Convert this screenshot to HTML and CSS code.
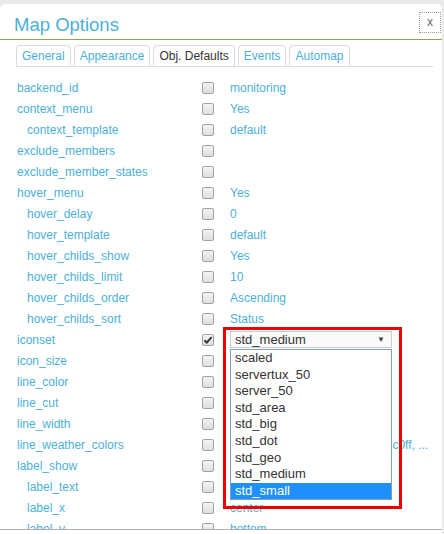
FILE: index.html
```html
<!DOCTYPE html>
<html>
<head>
<meta charset="utf-8">
<link rel="stylesheet" href="styles.css">
</head>
<body>
<div class="dialog">
  <div class="header">
    <h1 class="title">Map Options</h1>
    <div class="close">x</div>
  </div>
  <div class="tabs">
    <div class="tab">General</div>
    <div class="tab">Appearance</div>
    <div class="tab active">Obj. Defaults</div>
    <div class="tab">Events</div>
    <div class="tab">Automap</div>
  </div>
  <div class="content">
    <div class="row"><span class="label">backend_id</span><span class="cb"></span><span class="val">monitoring</span></div>
    <div class="row"><span class="label">context_menu</span><span class="cb"></span><span class="val">Yes</span></div>
    <div class="row"><span class="label sub">context_template</span><span class="cb"></span><span class="val">default</span></div>
    <div class="row"><span class="label">exclude_members</span><span class="cb"></span><span class="val"></span></div>
    <div class="row"><span class="label">exclude_member_states</span><span class="cb"></span><span class="val"></span></div>
    <div class="row"><span class="label">hover_menu</span><span class="cb"></span><span class="val">Yes</span></div>
    <div class="row"><span class="label sub">hover_delay</span><span class="cb"></span><span class="val">0</span></div>
    <div class="row"><span class="label sub">hover_template</span><span class="cb"></span><span class="val">default</span></div>
    <div class="row"><span class="label sub">hover_childs_show</span><span class="cb"></span><span class="val">Yes</span></div>
    <div class="row"><span class="label sub">hover_childs_limit</span><span class="cb"></span><span class="val">10</span></div>
    <div class="row"><span class="label sub">hover_childs_order</span><span class="cb"></span><span class="val">Ascending</span></div>
    <div class="row"><span class="label sub">hover_childs_sort</span><span class="cb"></span><span class="val">Status</span></div>
    <div class="row">
      <span class="label">iconset</span>
      <span class="cb checked"><svg width="12" height="12" viewBox="0 0 12 12"><path d="M2.5 6.2 L4.8 8.6 L9.6 3.2" fill="none" stroke="#333" stroke-width="2"/></svg></span>
      <div class="val selcell">
        <div class="select"><span>std_medium</span><span class="arrow">▼</span></div>
        <ul class="dropdown">
          <li>scaled</li>
          <li>servertux_50</li>
          <li>server_50</li>
          <li>std_area</li>
          <li>std_big</li>
          <li>std_dot</li>
          <li>std_geo</li>
          <li>std_medium</li>
          <li class="hl">std_small</li>
        </ul>
        <div class="highlight"></div>
      </div>
    </div>
    <div class="row"><span class="label">icon_size</span><span class="cb"></span><span class="val"></span></div>
    <div class="row"><span class="label">line_color</span><span class="cb"></span><span class="val"></span></div>
    <div class="row"><span class="label">line_cut</span><span class="cb"></span><span class="val"></span></div>
    <div class="row"><span class="label">line_width</span><span class="cb"></span><span class="val"></span></div>
    <div class="row"><span class="label">line_weather_colors</span><span class="cb"></span><span class="val weather"><span class="hidden-part">10:#8c00ff, 25:#2020ff, 40:#00</span>c0ff, ...</span></div>
    <div class="row"><span class="label">label_show</span><span class="cb"></span><span class="val"></span></div>
    <div class="row"><span class="label sub">label_text</span><span class="cb"></span><span class="val"></span></div>
    <div class="row"><span class="label sub">label_x</span><span class="cb"></span><span class="val">center</span></div>
    <div class="row"><span class="label sub">label_y</span><span class="cb"></span><span class="val">bottom</span></div>
  </div>
</div>
</body>
</html>
```
FILE: styles.css
```css
* { box-sizing: border-box; }
html, body {
  margin: 0;
  padding: 0;
  background: #e9e9e9;
  font-family: "Liberation Sans", Arial, sans-serif;
  height: 534px;
  overflow: hidden;
}
.dialog {
  margin-top: 4px;
  width: 442px;
  height: 530px;
  background: #fff;
  border-radius: 5px 5px 0 0;
  overflow: hidden;
}
.header {
  display: flex;
  align-items: flex-start;
  height: 36px;
  padding: 10px 1px 0 14px;
  border-bottom: 1px solid #8aa84a;
}
.title {
  margin: 0;
  font-size: 18.5px;
  line-height: 21px;
  font-weight: normal;
  color: #4cb0d8;
}
.close {
  margin-left: auto;
  margin-top: -2px;
  width: 22px;
  height: 21px;
  border: 1px dotted #9a9a9a;
  color: #666;
  font-size: 12px;
  line-height: 18px;
  text-align: center;
}
.tabs {
  display: flex;
  gap: 3px;
  margin: 5px 9px 0 16px;
  border-bottom: 1px solid #dcdcdc;
}
.tab {
  border: 1px solid #dcdcdc;
  border-bottom: none;
  border-radius: 4px 4px 0 0;
  padding: 0 5px;
  line-height: 20px;
  font-size: 12px;
  color: #4cb0d8;
  background: #fff;
}
.tab.active {
  color: #333;
}
.content {
  height: 463px;
  padding: 10px 0 0 17px;
  border-bottom: 1px solid #b0b0b0;
  overflow: hidden;
}
.row {
  display: grid;
  grid-template-columns: 185px 28px 1fr;
  align-items: center;
  height: 21px;
  font-size: 12px;
  color: #4cb0d8;
}
.label.sub {
  padding-left: 10px;
}
.cb {
  display: block;
  width: 12px;
  height: 12px;
  margin-top: 1px;
  border: 1px solid #a2a2a2;
  border-radius: 2px;
  background: linear-gradient(#f4f4f4, #dedede);
  position: relative;
}
.cb svg {
  position: absolute;
  left: -1px;
  top: -1px;
}
.val {
  white-space: nowrap;
}
.hidden-part {
  visibility: hidden;
}
.selcell {
  position: relative;
  height: 21px;
  display: flex;
  align-items: center;
}
.select {
  width: 162px;
  height: 17px;
  border: 1px solid #cdcdcd;
  background: #fafafa;
  display: flex;
  align-items: center;
  justify-content: space-between;
  padding: 0 6px 0 4px;
  font-size: 13px;
  color: #333;
}
.arrow {
  font-size: 8px;
  color: #444;
}
.dropdown {
  position: absolute;
  left: 0;
  top: 20px;
  width: 162px;
  margin: 0;
  padding: 0;
  list-style: none;
  background: #fff;
  border: 1px solid #7f9dc9;
  z-index: 2;
}
.dropdown li {
  height: 16.6px;
  line-height: 16.6px;
  padding-left: 4px;
  font-size: 13px;
  color: #333;
}
.dropdown li.hl {
  background: #1e90ff;
  color: #fff;
}
.highlight {
  position: absolute;
  left: -7px;
  top: -2px;
  width: 179px;
  height: 182px;
  border: 3px solid #ee0000;
  z-index: 3;
}
```
